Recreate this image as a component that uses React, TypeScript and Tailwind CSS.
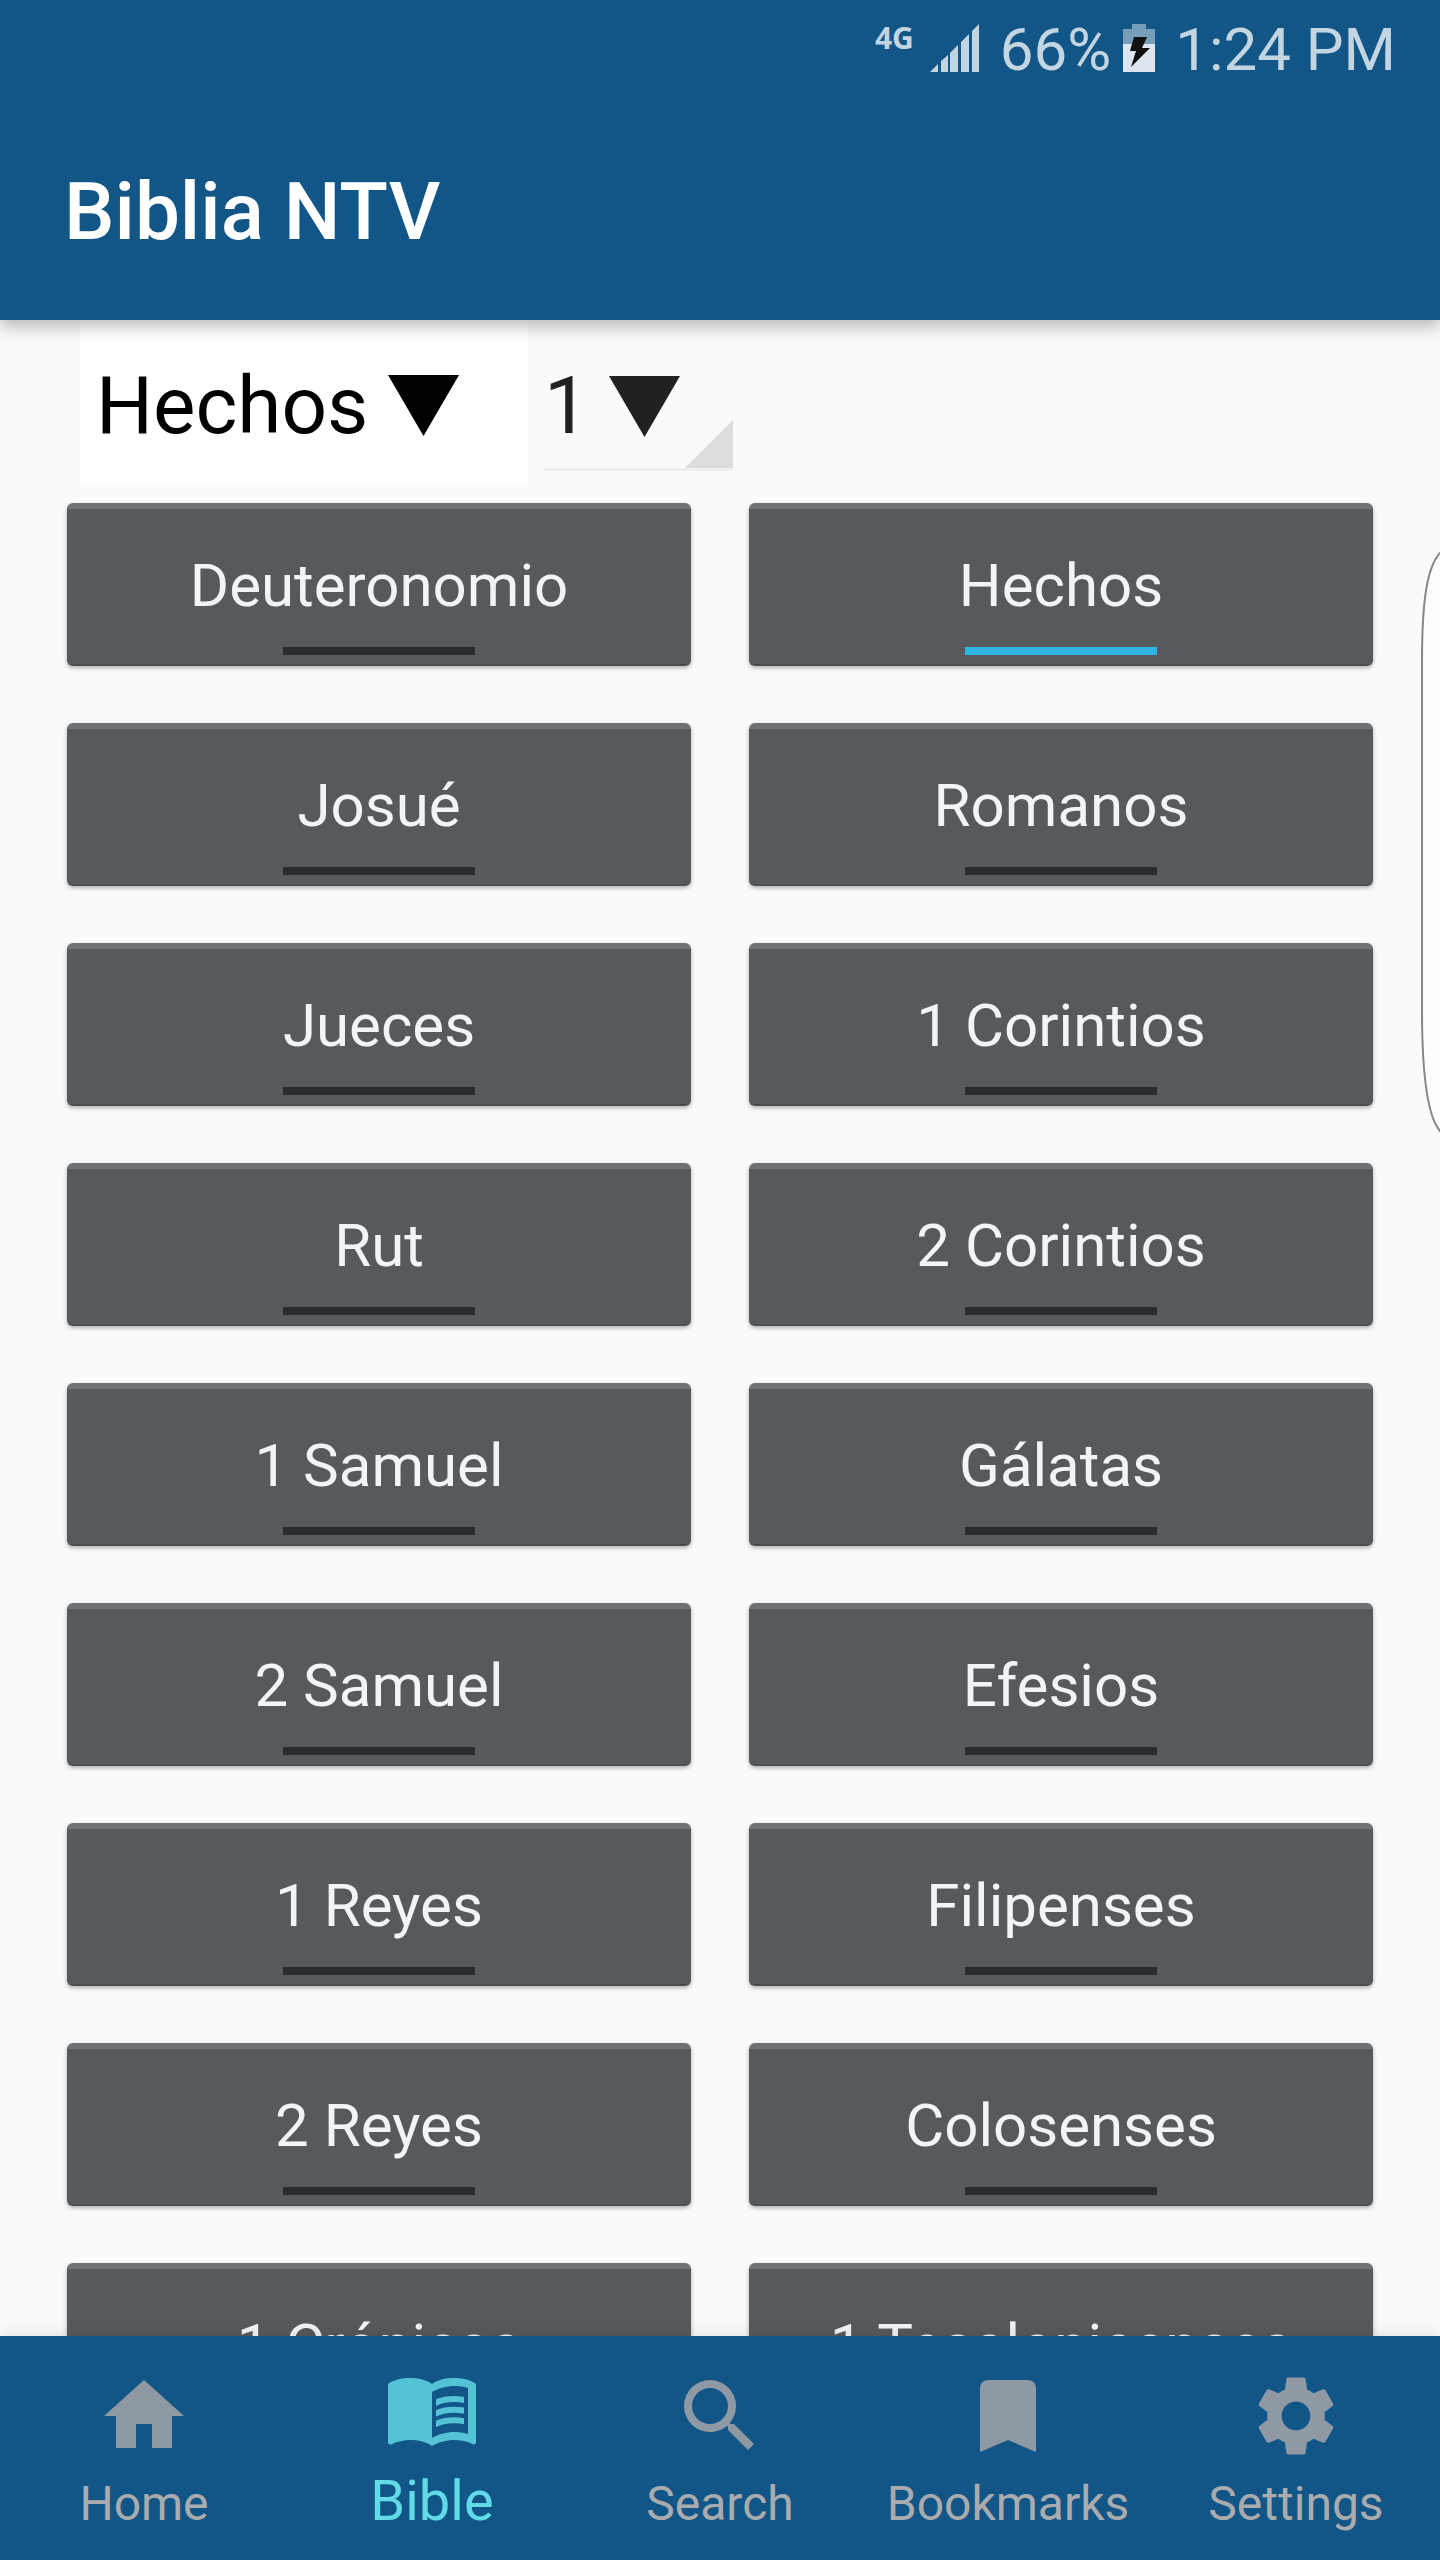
import { useState } from 'react'
import type { IconType } from 'react-icons'
import { MdBookmark, MdHome, MdMenuBook, MdSearch, MdSettings } from 'react-icons/md'

interface Tab {
  label: string
  icon: IconType
}

const TABS: Tab[] = [
  { label: 'Home', icon: MdHome },
  { label: 'Bible', icon: MdMenuBook },
  { label: 'Search', icon: MdSearch },
  { label: 'Bookmarks', icon: MdBookmark },
  { label: 'Settings', icon: MdSettings },
]

// Rows of the picker: Old Testament on the left, New Testament on the right
const BOOKS = [
  'Deuteronomio', 'Hechos',
  'Josué', 'Romanos',
  'Jueces', '1 Corintios',
  'Rut', '2 Corintios',
  '1 Samuel', 'Gálatas',
  '2 Samuel', 'Efesios',
  '1 Reyes', 'Filipenses',
  '2 Reyes', 'Colosenses',
  '1 Crónicas', '1 Tesalonicenses',
]

function SignalIcon() {
  return (
    <svg className="h-12 w-[50px]" viewBox="0 0 50 48" fill="#c4d5e2" aria-hidden="true">
      <path d="M0 48L8 40V48ZM11 48V37L18 31V48ZM20 48V29L28 21V48ZM31 48V18L39 10V48ZM42 48V7L49 0V48Z" />
    </svg>
  )
}

function BatteryIcon() {
  return (
    <svg className="h-12 w-8" viewBox="0 0 32 48" aria-hidden="true">
      <path d="M9 0H23V5H32V20H0V5H9Z" fill="#769dba" />
      <path d="M0 20H32V48H0Z" fill="#dde6ee" />
      <path d="M11 13H24L19 24H27L8 43L13 27H7Z" fill="#111" />
    </svg>
  )
}

function DownTriangle() {
  return (
    <svg className="h-[61px] w-[71px] shrink-0" viewBox="0 0 71 61" fill="currentColor" aria-hidden="true">
      <path d="M0 0H71L35.500 61Z" />
    </svg>
  )
}

function StatusBar() {
  return (
    <div className="flex h-24 items-center justify-end pr-11 text-[60px] leading-none text-[#c4d5e2]">
      <span className="mr-4 self-start pt-6 font-['Open_Sans'] text-[30px] font-bold leading-7">4G</span>
      <SignalIcon />
      <span className="ml-5 pt-1">66%</span>
      <span className="ml-3">
        <BatteryIcon />
      </span>
      <span className="ml-5 pt-1">1:24 PM</span>
    </div>
  )
}

interface BookButtonProps {
  name: string
  selected: boolean
  onSelect: () => void
}

function BookButton({ name, selected, onSelect }: BookButtonProps) {
  return (
    <button
      type="button"
      aria-pressed={selected}
      onClick={onSelect}
      className="flex h-[163px] flex-col items-center justify-end rounded-md border-t-[6px] border-b-2 border-t-[#6f7274] border-b-[#4d4f51] bg-[#565a5d] pb-[9px] text-[60px] leading-[70px] text-[#f3f4f5] shadow-[0_2px_4px_rgba(0,0,0,0.3)]"
    >
      <span className="mb-[26px]">{name}</span>
      <span className={selected ? 'h-2 w-48 bg-[#2fb3e5]' : 'h-2 w-48 bg-[#2a2d30]'} />
    </button>
  )
}

export default function App() {
  const [book, setBook] = useState('Hechos')
  const [chapter, setChapter] = useState('1')
  const [tab, setTab] = useState('Bible')

  return (
    <div className="relative flex h-screen flex-col overflow-hidden bg-[#fafafa] font-[Roboto,sans-serif]">
      <header className="z-10 shrink-0 bg-[#125688] shadow-[0_6px_16px_rgba(0,0,0,0.28)]">
        <StatusBar />
        <div className="flex h-56 items-center px-16 pt-2">
          <h1 className="text-[80px] font-medium leading-none text-white">Biblia NTV</h1>
        </div>
      </header>

      <main className="min-h-0 flex-1 overflow-hidden">
        <div className="flex items-start px-20">
          <label className="flex h-[167px] min-w-[448px] items-center bg-white px-4 pt-1 text-black">
            <select
              aria-label="Book"
              value={book}
              onChange={(e) => setBook(e.target.value)}
              className="mr-5 field-sizing-content appearance-none bg-transparent text-[80px] leading-[94px]"
            >
              {BOOKS.map((name) => (
                <option key={name}>{name}</option>
              ))}
            </select>
            <DownTriangle />
          </label>
          <label className="relative ml-4 flex h-[151px] w-[189px] items-center border-b-[3px] border-[#eeeeee] pt-6 text-[#212121]">
            <select
              aria-label="Chapter"
              value={chapter}
              onChange={(e) => setChapter(e.target.value)}
              className="mr-5 field-sizing-content appearance-none bg-transparent text-[80px] leading-[94px]"
            >
              <option>1</option>
            </select>
            <DownTriangle />
            <svg className="absolute right-0 bottom-0 size-12" viewBox="0 0 48 48" fill="#dddddd" aria-hidden="true">
              <path d="M48 0V48H0Z" />
            </svg>
          </label>
        </div>

        <div className="mt-4 grid grid-cols-2 gap-x-[58px] gap-y-[57px] px-[67px]">
          {BOOKS.map((name) => (
            <BookButton key={name} name={name} selected={name === book} onSelect={() => setBook(name)} />
          ))}
        </div>
      </main>

      <nav className="z-10 grid h-56 shrink-0 grid-cols-5 bg-[#125688] shadow-[0_0_18px_rgba(0,0,0,0.12)]">
        {TABS.map(({ label, icon: Icon }) => {
          const active = label === tab
          return (
            <button
              key={label}
              type="button"
              aria-current={active ? 'page' : undefined}
              onClick={() => setTab(label)}
              className={
                active
                  ? 'flex flex-col items-center justify-start pt-6 text-[56px] leading-[66px] text-[#62dbe8]'
                  : 'flex flex-col items-center justify-start pt-8 text-[48px] leading-[56px] text-[#a9abad]'
              }
            >
              <Icon className={active ? 'mb-3 size-24 text-[#53c3d5]' : 'mb-3 size-24 text-[#8e99a3]'} />
              {label}
            </button>
          )
        })}
      </nav>

      {/* Edge panel handle, hangs off the right side of the screen */}
      <svg className="absolute top-[550px] right-0 z-20 h-[584px] w-5" viewBox="0 0 20 584" aria-hidden="true">
        <path
          d="M21 2C7 16 2 50 2 112V460C2 525 7 568 21 582"
          fill="#fdfdfd"
          stroke="#888888"
          strokeWidth="2"
        />
      </svg>
    </div>
  )
}
